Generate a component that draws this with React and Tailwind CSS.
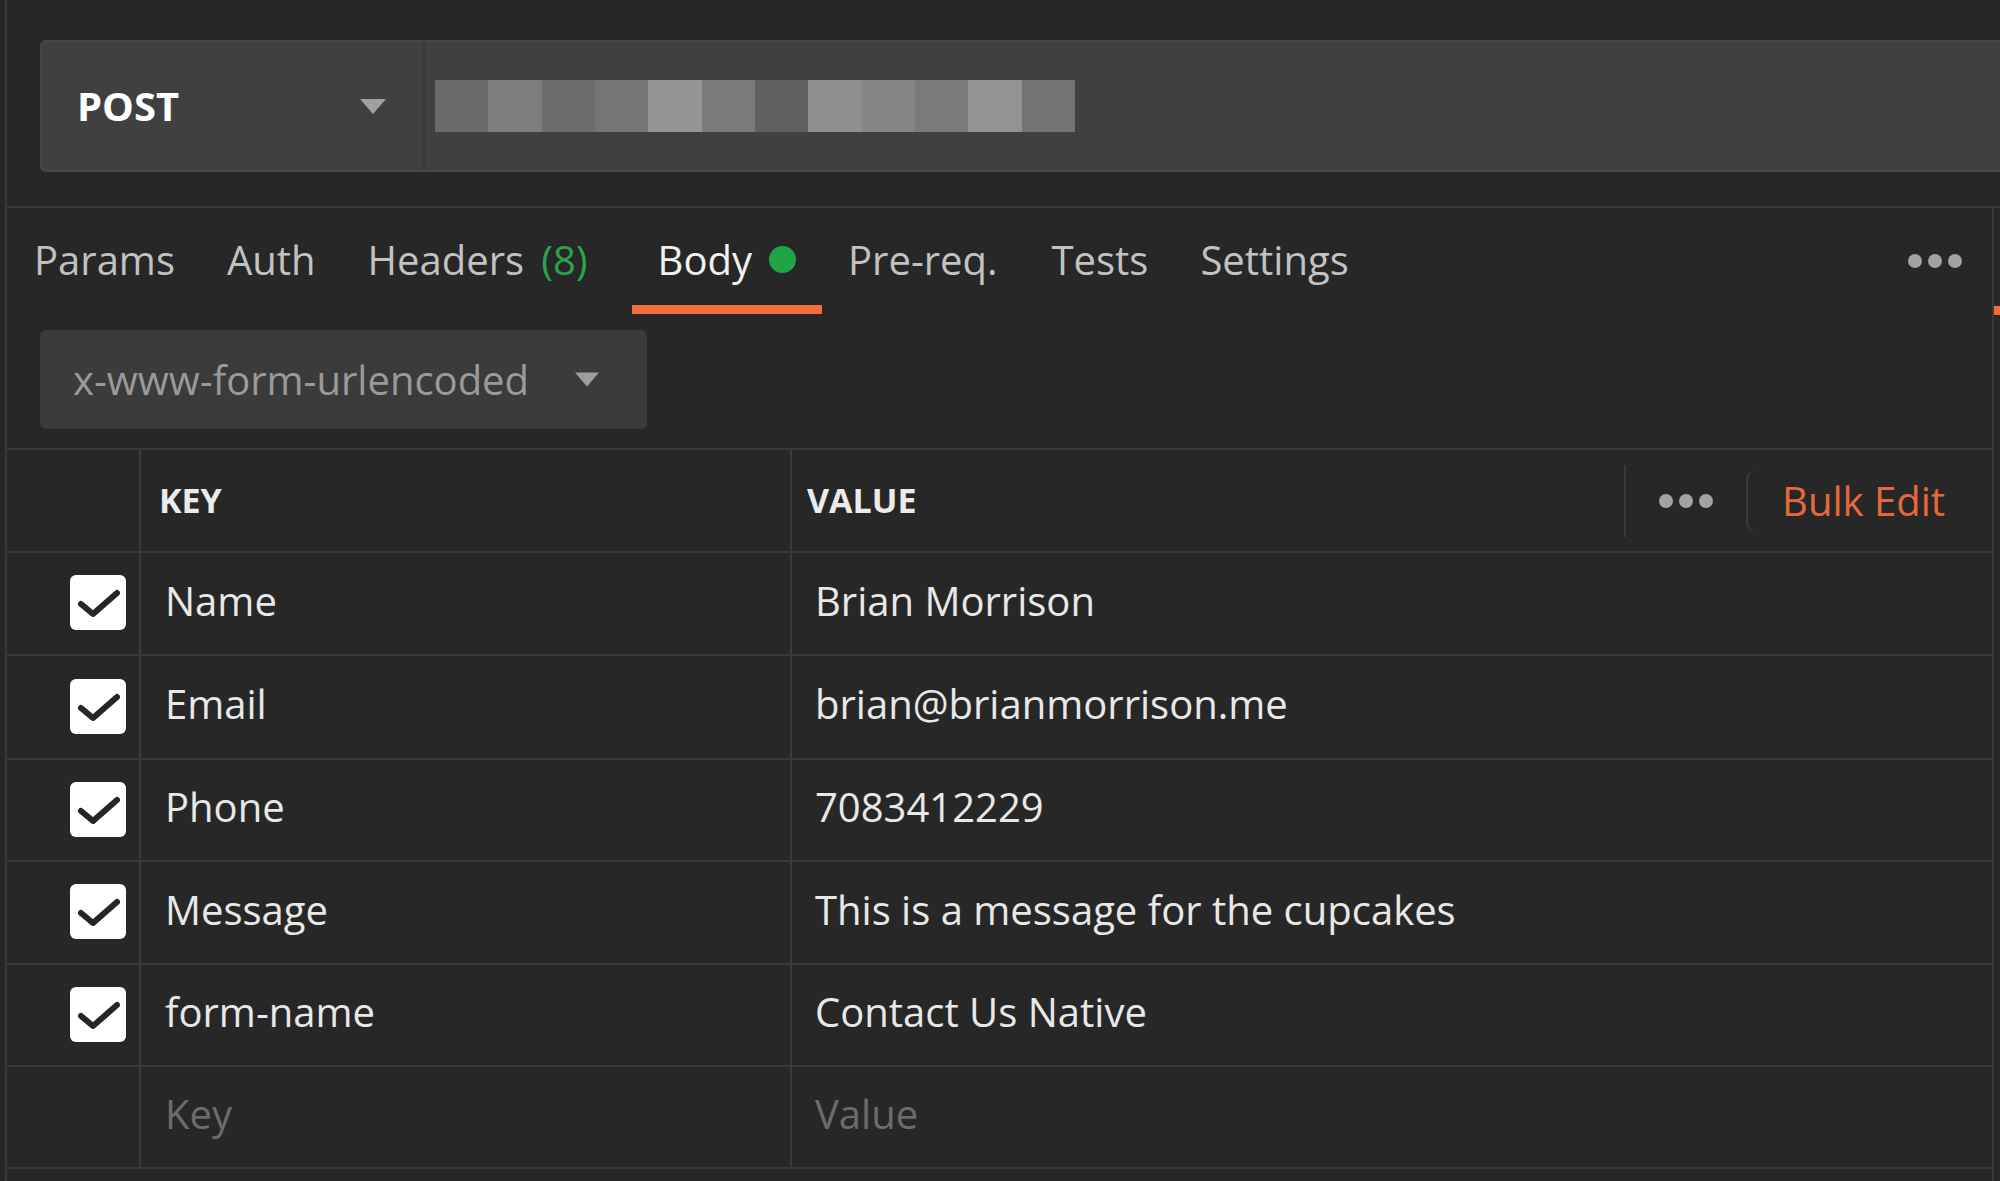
import React from "react";

const blocks = [
  "bg-[#6a6a6a]",
  "bg-[#7d7d7d]",
  "bg-[#6c6c6c]",
  "bg-[#757575]",
  "bg-[#959595]",
  "bg-[#7a7a7a]",
  "bg-[#5f5f5f]",
  "bg-[#8f8f8f]",
  "bg-[#868686]",
  "bg-[#7a7a7a]",
  "bg-[#939393]",
  "bg-[#737373]",
];

const rows = [
  { k: "Name", v: "Brian Morrison", h: "h-[103px]" },
  { k: "Email", v: "brian@brianmorrison.me", h: "h-[104px]" },
  { k: "Phone", v: "7083412229", h: "h-[102px]" },
  { k: "Message", v: "This is a message for the cupcakes", h: "h-[103px]" },
  { k: "form-name", v: "Contact Us Native", h: "h-[102px]" },
];

function Caret({ className, color }) {
  return (
    <svg className={className} viewBox="0 0 26 15">
      <path d="M0 0 L26 0 L13 15 Z" fill={color} />
    </svg>
  );
}

function Dots({ className = "" }) {
  return (
    <div className={"flex items-center gap-[6px] " + className}>
      <span className="w-[14px] h-[14px] rounded-full bg-[#a3a3a3]" />
      <span className="w-[14px] h-[14px] rounded-full bg-[#a3a3a3]" />
      <span className="w-[14px] h-[14px] rounded-full bg-[#a3a3a3]" />
    </div>
  );
}

function Check() {
  return (
    <div className="w-[56px] h-[55px] rounded-[6px] bg-white flex items-center justify-center">
      <svg className="w-[56px] h-[55px]" viewBox="0 0 56 55">
        <path
          d="M11 29 L23 39 L47 18"
          fill="none"
          stroke="#262626"
          strokeWidth="6"
          strokeLinecap="round"
          strokeLinejoin="round"
        />
      </svg>
    </div>
  );
}

function Tab({ children, active, className = "" }) {
  return (
    <div
      className={
        "flex items-center px-[26px] pt-[6px] border-b-[9px] " +
        (active ? "border-[#f26d39] text-[#f2f2f2]" : "border-transparent text-[#c2c2c2]") +
        " " +
        className
      }
    >
      {children}
    </div>
  );
}

export default function App() {
  return (
    <div className="w-[2000px] h-[1181px] overflow-hidden bg-[#272727] font-['Open_Sans',sans-serif]">
      <div className="ml-[5px] h-full border-l-2 border-[#393939] flex flex-col">
        {/* URL bar */}
        <div className="h-[206px] shrink-0 pt-[40px] pl-[33px]">
          <div className="h-[132px] flex rounded-l-[6px] bg-[#404040] border-t-2 border-l-2 border-b-2 border-[#474747]">
            <div className="w-[383px] shrink-0 flex items-center justify-between pl-[35px] pr-[37px] border-r-2 border-[#393939]">
              <span className="text-[40px] font-bold text-white leading-none">POST</span>
              <Caret className="w-[26px] h-[15px]" color="#a0a0a0" />
            </div>
            <div className="flex items-center pl-[10px]">
              <div className="flex h-[52px]">
                {blocks.map((b, i) => (
                  <div key={i} className={"w-[53.33px] h-full " + b} />
                ))}
              </div>
            </div>
          </div>
        </div>

        {/* Lower panel */}
        <div className="flex flex-1 border-t-2 border-[#3a3a3a]">
          <div className="flex-1 flex flex-col border-r-2 border-[#3a3a3a]">
            {/* Tabs */}
            <div className="h-[106px] shrink-0 flex items-stretch text-[40px] pl-[1px]">
              <Tab>Params</Tab>
              <Tab>Auth</Tab>
              <Tab className="mr-[18px]">
                Headers<span className="ml-[17px] text-[#29a449]">(8)</span>
              </Tab>
              <Tab active>
                Body
                <span className="ml-[17px] w-[27px] h-[27px] rounded-full bg-[#1fa447]" />
              </Tab>
              <Tab className="mr-[2px]">Pre-req.</Tab>
              <Tab>Tests</Tab>
              <Tab>Settings</Tab>
              <div className="flex-1" />
              <div className="flex items-center pr-[30px]">
                <Dots />
              </div>
            </div>

            {/* Body type dropdown */}
            <div className="mt-[16px] ml-[33px] w-[607px] h-[99px] shrink-0 rounded-[6px] bg-[#3b3b3b] flex items-center justify-between pl-[33px] pr-[48px]">
              <span className="text-[40px] text-[#9a9a9a]">x-www-form-urlencoded</span>
              <Caret className="w-[24px] h-[15px]" color="#9e9e9e" />
            </div>

            {/* Table */}
            <div className="mt-[19px] border-t-2 border-[#3a3a3a] flex flex-col">
              {/* header */}
              <div className="h-[103px] flex border-b-2 border-[#3a3a3a]">
                <div className="w-[134px] shrink-0 border-r-2 border-[#3a3a3a]" />
                <div className="w-[651px] shrink-0 border-r-2 border-[#3a3a3a] flex items-center pl-[18px]">
                  <span className="text-[34px] font-bold text-[#ebebeb]">KEY</span>
                </div>
                <div className="flex-1 flex items-center pl-[15px]">
                  <span className="text-[34px] font-bold text-[#ebebeb]">VALUE</span>
                  <div className="flex-1" />
                  <div className="w-[2px] h-[72px] bg-[#3a3a3a]" />
                  <Dots className="ml-[33px]" />
                  <div className="ml-[33px] h-[64px] w-[14px] border-l-2 border-[#3a3a3a] rounded-l-[12px]" />
                  <span className="ml-[22px] mr-[47px] text-[40px] text-[#e5693a]">Bulk Edit</span>
                </div>
              </div>
              {rows.map((r) => (
                <div key={r.k} className={"flex border-b-2 border-[#3a3a3a] " + r.h}>
                  <div className="w-[134px] shrink-0 border-r-2 border-[#3a3a3a] flex items-center justify-end pr-[13px] pb-[2px]">
                    <Check />
                  </div>
                  <div className="w-[651px] shrink-0 border-r-2 border-[#3a3a3a] flex items-center pl-[24px] pb-[6px]">
                    <span className="text-[40px] text-[#e8e8e8]">{r.k}</span>
                  </div>
                  <div className="flex-1 flex items-center pl-[23px] pb-[6px]">
                    <span className="text-[40px] text-[#e8e8e8]">{r.v}</span>
                  </div>
                </div>
              ))}
              <div className="flex border-b-2 border-[#3a3a3a] h-[102px]">
                <div className="w-[134px] shrink-0 border-r-2 border-[#3a3a3a]" />
                <div className="w-[651px] shrink-0 border-r-2 border-[#3a3a3a] flex items-center pl-[24px] pb-[6px]">
                  <span className="text-[40px] text-[#6b6b6b]">Key</span>
                </div>
                <div className="flex-1 flex items-center pl-[23px] pb-[6px]">
                  <span className="text-[40px] text-[#6b6b6b]">Value</span>
                </div>
              </div>
            </div>
          </div>
          <div className="w-[6px] shrink-0 relative">
            <div className="absolute left-0 top-[98px] w-[6px] h-[9px] bg-[#f26d39]" />
          </div>
        </div>
      </div>
    </div>
  );
}
